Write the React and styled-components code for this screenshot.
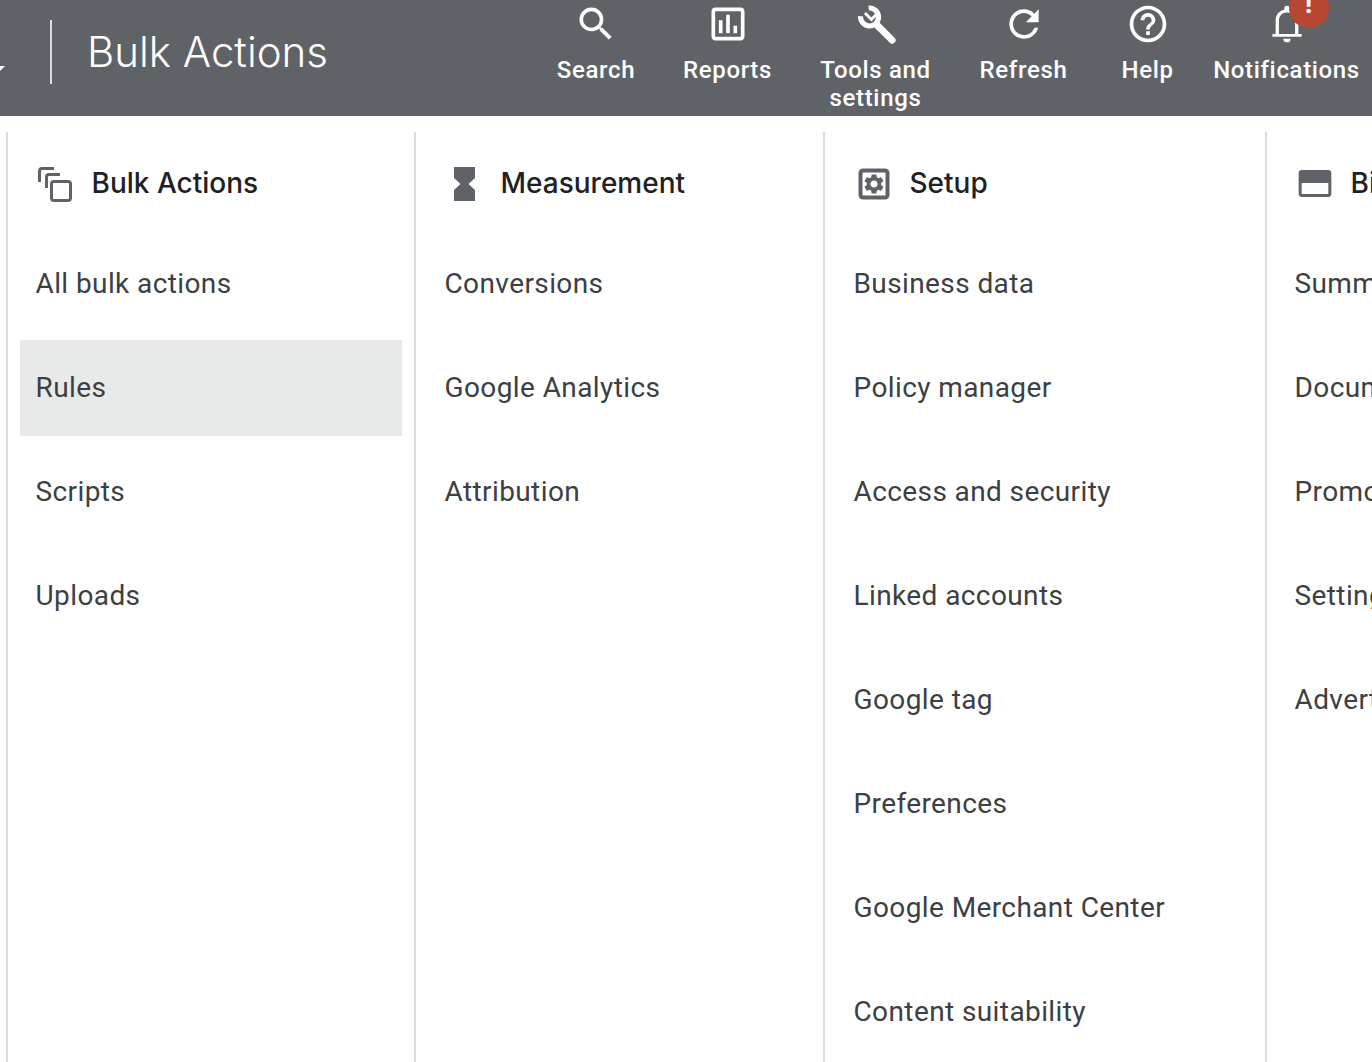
import styled, { createGlobalStyle } from "styled-components";

const GlobalStyle = createGlobalStyle`
  html, body {
    margin: 0;
    background: #fff;
    overflow: hidden;
    height: 100%;
  }
`;

const Page = styled.div`
  width: 1372px;
  height: 1062px;
  overflow: hidden;
  font-family: Roboto, "Liberation Sans", sans-serif;
`;

const Header = styled.header`
  display: flex;
  height: 116px;
  background: #5f6368;
  color: #fff;
  overflow: hidden;
`;

const TitleArea = styled.div`
  display: flex;
  align-items: center;
  height: 104px;
`;

const BackArrowTip = styled.svg`
  align-self: flex-start;
  width: 5px;
  height: 5px;
  margin: 66px 45px 0 0;
  fill: #fff;
`;

const Divider = styled.div`
  width: 2px;
  height: 64px;
  background: #dadce0;
`;

const Title = styled.h1`
  margin: 0 0 2px 35px;
  font-family: Inter, sans-serif;
  font-size: 42px;
  font-weight: 300;
`;

const Nav = styled.nav`
  display: flex;
  margin-left: auto;
  margin-right: 4px;
`;

const NavItem = styled.a`
  width: ${(p) => p.$w}px;
  padding-top: 2px;
  text-align: center;
  font-size: 24px;
  line-height: 28px;
  font-weight: 500;
  letter-spacing: 0.65px;
`;

const NavIcon = styled.div`
  position: relative;
  width: 44px;
  height: 44px;
  margin: 0 auto 10px;

  svg {
    display: block;
    width: 44px;
    height: 44px;
    fill: #fff;
  }
`;

const Badge = styled.span`
  position: absolute;
  left: 24px;
  top: -14px;
  width: 40px;
  height: 40px;
  border-radius: 50%;
  background: #b94631;
  font-size: 28px;
  line-height: 32px;
  font-weight: 700;
  letter-spacing: 0;
`;

const Columns = styled.main`
  display: flex;
  height: 930px;
  margin-top: 16px;
  padding-left: 6px;
`;

const Column = styled.section`
  flex: none;
  box-sizing: border-box;
  width: ${(p) => p.$w}px;
  border-left: 2px solid #dadce0;
  padding-left: ${(p) => p.$pad}px;
  overflow: hidden;
`;

const ColumnHead = styled.div`
  display: flex;
  align-items: center;
  box-sizing: border-box;
  height: 104px;
  padding: 0 0 2px 15.5px;
  font-family: Inter, sans-serif;
  font-size: 28px;
  font-weight: 500;
  color: #202124;
  white-space: nowrap;

  svg {
    flex: none;
    width: 40px;
    height: 40px;
    margin: 2px 16px 0 0;
    fill: #5f6368;
  }
`;

const Items = styled.ul`
  display: flex;
  flex-direction: column;
  gap: 8px;
  margin: 0;
  padding: 0;
  list-style: none;
`;

const Item = styled.li`
  display: flex;
  align-items: center;
  height: 96px;
  width: 382px;
  padding: 0 0 2px 15.5px;
  box-sizing: border-box;
  font-size: 28px;
  letter-spacing: 0.4px;
  color: #3c4043;
  white-space: nowrap;
  background: ${(p) => (p.$active ? "#e8eaea" : "transparent")};
`;

const SearchIcon = () => (
  <svg viewBox="0 0 24 24"><path d="M15.5 14h-.79l-.28-.27A6.471 6.471 0 0 0 16 9.5 6.5 6.5 0 1 0 9.5 16c1.61 0 3.09-.59 4.23-1.57l.27.28v.79l5 4.99L20.49 19l-4.99-5zm-6 0C7.01 14 5 11.99 5 9.5S7.01 5 9.5 5 14 7.01 14 9.5 11.99 14 9.5 14z" /></svg>
);
const ReportsIcon = () => (
  <svg viewBox="0 0 24 24"><path d="M19 3H5c-1.1 0-2 .9-2 2v14c0 1.1.9 2 2 2h14c1.1 0 2-.9 2-2V5c0-1.1-.9-2-2-2zm0 16H5V5h14v14zM7 10h2v7H7zM11 7h2v10h-2zM15 13h2v4h-2z" /></svg>
);
const ToolsIcon = () => (
  <svg viewBox="0 0 24 24">
    <path d="M8 3.300A4.900 4.900 0 1 1 3.600 7.800" fill="none" stroke="#fff" strokeWidth="2.800" />
    <path d="M6 6l3.500 3.500 2.800-2.800" fill="none" stroke="#fff" strokeWidth="1.600" />
    <path d="M12.500 12.500L20.800 20.800" fill="none" stroke="#fff" strokeWidth="3.800" strokeLinecap="round" />
  </svg>
);
const RefreshIcon = () => (
  <svg viewBox="0 0 24 24"><path d="M17.65 6.35C16.2 4.9 14.21 4 12 4c-4.42 0-7.99 3.58-7.99 8s3.57 8 7.99 8c3.73 0 6.84-2.55 7.73-6h-2.08c-.82 2.33-3.04 4-5.65 4-3.31 0-6-2.69-6-6s2.69-6 6-6c1.66 0 3.14.69 4.22 1.78L13 11h7V4l-2.35 2.35z" /></svg>
);
const HelpIcon = () => (
  <svg viewBox="0 0 24 24"><path d="M11 18h2v-2h-2v2zm1-16C6.48 2 2 6.48 2 12s4.48 10 10 10 10-4.48 10-10S17.52 2 12 2zm0 18c-4.41 0-8-3.59-8-8s3.59-8 8-8 8 3.59 8 8-3.59 8-8 8zm0-14c-2.21 0-4 1.79-4 4h2c0-1.1.9-2 2-2s2 .9 2 2c0 2-3 1.75-3 5h2c0-2.25 3-2.5 3-5 0-2.21-1.79-4-4-4z" /></svg>
);
const BellIcon = () => (
  <svg viewBox="0 0 24 24"><path fillRule="evenodd" d="M4 19v-1.600h1.800V10c0-2.900 1.700-5.100 4.700-5.800V3.500a1.500 1.500 0 0 1 3 0v.7c3 .7 4.700 2.900 4.700 5.800v7.400H20V19H4zm3.600-1.600h8.800V10c0-2.400-1.900-4.300-4.400-4.300S7.600 7.600 7.600 10v7.400zM10 20h4a2 2 0 0 1-4 0z" /></svg>
);
const BulkIcon = () => (
  <svg viewBox="0 0 40 40">
    <g fill="none" stroke="#5f6368" strokeWidth="3">
      <path d="M3.500 18V7a2.500 2.500 0 0 1 2.500-2.500H18" />
      <path d="M10.500 24V13a2.500 2.500 0 0 1 2.500-2.500H24" />
      <rect x="15.500" y="17.500" width="19" height="19" rx="2.500" />
    </g>
  </svg>
);
const HourglassIcon = () => (
  <svg viewBox="0 0 40 40"><path d="M9 3h21v11l-6.500 6 6.500 6v11H9V26l6.500-6L9 14V3z" /></svg>
);
const SetupIcon = () => (
  <svg viewBox="0 0 24 24">
    <rect x="3.900" y="3.900" width="16.200" height="16.200" rx="1.500" fill="none" stroke="#5f6368" strokeWidth="2.400" />
    <path
      transform="translate(4.800 4.800) scale(0.6)"
      fillRule="evenodd"
      d="M19.14 12.94c.04-.3.06-.61.06-.94 0-.32-.02-.64-.07-.94l2.03-1.58a.49.49 0 0 0 .12-.61l-1.92-3.32a.488.488 0 0 0-.59-.22l-2.39.96c-.5-.38-1.03-.7-1.62-.94l-.36-2.54a.484.484 0 0 0-.48-.41h-3.84c-.24 0-.43.17-.47.41l-.36 2.54c-.59.24-1.13.57-1.62.94l-2.39-.96c-.22-.08-.47 0-.59.22L2.74 8.87c-.12.21-.08.47.12.61l2.03 1.58c-.05.3-.09.63-.09.94s.02.64.07.94l-2.03 1.58a.49.49 0 0 0-.12.61l1.92 3.32c.12.22.37.29.59.22l2.39-.96c.5.38 1.03.7 1.62.94l.36 2.54c.05.24.24.41.48.41h3.84c.24 0 .44-.17.47-.41l.36-2.54c.59-.24 1.13-.56 1.62-.94l2.39.96c.22.08.47 0 .59-.22l1.92-3.32c.12-.22.07-.47-.12-.61l-2.01-1.58zM12 15.6c-1.98 0-3.6-1.62-3.6-3.6s1.62-3.6 3.6-3.6 3.6 1.62 3.6 3.6-1.62 3.6-3.6 3.6z"
    />
  </svg>
);
const BillingIcon = () => (
  <svg viewBox="0 0 24 24"><path fillRule="evenodd" d="M4 3.600h16c1 0 1.800.8 1.800 1.800v12.600c0 1-.8 1.800-1.800 1.800H4c-1 0-1.800-.8-1.800-1.800V5.400c0-1 .8-1.800 1.800-1.800zm0 7.800V18h16v-6.600H4z" /></svg>
);

const navItems = [
  { label: "Search", w: 130, icon: <SearchIcon /> },
  { label: "Reports", w: 133, icon: <ReportsIcon /> },
  { label: "Tools and settings", w: 163, icon: <ToolsIcon /> },
  { label: "Refresh", w: 133, icon: <RefreshIcon /> },
  { label: "Help", w: 115, icon: <HelpIcon /> },
  { label: "Notifications", w: 163, icon: <BellIcon />, badge: true },
];

const columns = [
  {
    title: "Bulk Actions",
    w: 408,
    pad: 12,
    icon: <BulkIcon />,
    items: ["All bulk actions", "Rules", "Scripts", "Uploads"],
    active: "Rules",
  },
  {
    title: "Measurement",
    w: 409,
    pad: 13,
    icon: <HourglassIcon />,
    items: ["Conversions", "Google Analytics", "Attribution"],
  },
  {
    title: "Setup",
    w: 442,
    pad: 13,
    icon: <SetupIcon />,
    items: [
      "Business data",
      "Policy manager",
      "Access and security",
      "Linked accounts",
      "Google tag",
      "Preferences",
      "Google Merchant Center",
      "Content suitability",
    ],
  },
  {
    title: "Billing",
    w: 300,
    pad: 12,
    icon: <BillingIcon />,
    items: ["Summary", "Documents", "Promotions", "Settings", "Advertiser verification"],
  },
];

export default function App() {
  return (
    <Page>
      <GlobalStyle />
      <Header>
        <TitleArea>
          <BackArrowTip viewBox="0 0 5 5">
            <path d="M0 0h5L0 5z" />
          </BackArrowTip>
          <Divider />
          <Title>Bulk Actions</Title>
        </TitleArea>
        <Nav>
          {navItems.map((item) => (
            <NavItem key={item.label} $w={item.w}>
              <NavIcon>
                {item.icon}
                {item.badge && <Badge>!</Badge>}
              </NavIcon>
              {item.label}
            </NavItem>
          ))}
        </Nav>
      </Header>
      <Columns>
        {columns.map((col) => (
          <Column key={col.title} $w={col.w} $pad={col.pad}>
            <ColumnHead>
              {col.icon}
              {col.title}
            </ColumnHead>
            <Items>
              {col.items.map((label) => (
                <Item key={label} $active={label === col.active}>
                  {label}
                </Item>
              ))}
            </Items>
          </Column>
        ))}
      </Columns>
    </Page>
  );
}
